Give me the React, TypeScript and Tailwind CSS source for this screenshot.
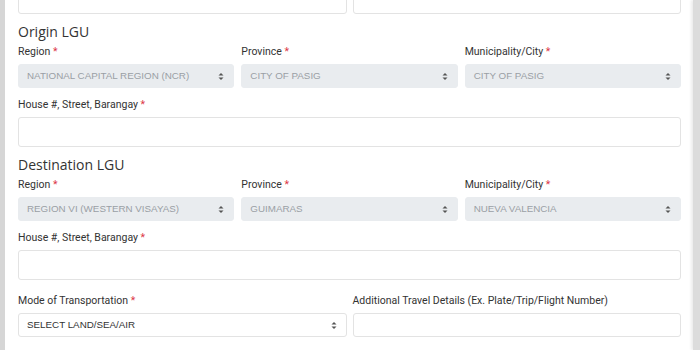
function Caret() {
  return (
    <svg width="6" height="9" viewBox="0 0 6 9" className="shrink-0">
      <path d="M3 1 L5.5 3.5 L0.5 3.5 Z" fill="#555" />
      <path d="M3 8 L5.5 5.5 L0.5 5.5 Z" fill="#555" />
    </svg>
  )
}

function Label({ text, required = true }: { text: string; required?: boolean }) {
  return (
    <p className="text-[10.5px] leading-[12px] text-[#333] font-['Roboto',sans-serif] mb-[6px]">
      {text}
      {required && <span className="text-[#dc3545]"> *</span>}
    </p>
  )
}

function Select({ value, disabled = true }: { value: string; disabled?: boolean }) {
  return (
    <div
      className={`h-[24px] rounded-[3px] border flex items-center justify-between pl-[8px] pr-[9px] font-['Liberation_Sans',Arial,sans-serif] text-[9.8px] ${
        disabled ? 'bg-[#e9ecef] border-[#e9ecef] text-[#9a9fa5]' : 'bg-white border-[#e3e3e3] text-[#333]'
      }`}
    >
      <span>{value}</span>
      <Caret />
    </div>
  )
}

function TextBox({ h = 'h-[30px]' }: { h?: string }) {
  return <div className={`${h} rounded-[3px] border border-[#e3e3e3] bg-white`} />
}

function LguSection({ title, region, province, city }: { title: string; region: string; province: string; city: string }) {
  return (
    <div>
      <h3 className="text-[14px] leading-[18px] text-[#333] font-['Open_Sans',sans-serif] mb-[5px]">{title}</h3>
      <div className="grid grid-cols-3 gap-x-[7px]">
        <div>
          <Label text="Region" />
          <Select value={region} />
        </div>
        <div>
          <Label text="Province" />
          <Select value={province} />
        </div>
        <div>
          <Label text="Municipality/City" />
          <Select value={city} />
        </div>
      </div>
      <div className="mt-[11px]">
        <Label text="House #, Street, Barangay" />
        <TextBox />
      </div>
    </div>
  )
}

export default function App() {
  return (
    <div className="w-[700px] h-[350px] flex bg-white overflow-hidden">
      <div className="w-[5px] bg-[#d6d6d6]" />
      <div className="flex-1 pl-[13px] pr-[12px] -mt-[16px]">
        {/* Previous row */}
        <div className="grid grid-cols-2 gap-x-[6px]">
          <TextBox />
          <TextBox />
        </div>

        <div className="mt-[9px]">
          <LguSection
            title="Origin LGU"
            region="NATIONAL CAPITAL REGION (NCR)"
            province="CITY OF PASIG"
            city="CITY OF PASIG"
          />
        </div>

        <div className="mt-[9px]">
          <LguSection
            title="Destination LGU"
            region="REGION VI (WESTERN VISAYAS)"
            province="GUIMARAS"
            city="NUEVA VALENCIA"
          />
        </div>

        {/* Transportation */}
        <div className="grid grid-cols-2 gap-x-[6px] mt-[15px]">
          <div>
            <Label text="Mode of Transportation" />
            <Select value="SELECT LAND/SEA/AIR" disabled={false} />
          </div>
          <div>
            <Label text="Additional Travel Details (Ex. Plate/Trip/Flight Number)" required={false} />
            <TextBox h="h-[24px]" />
          </div>
        </div>
      </div>
      <div className="w-[7px] bg-[#dcdcdc] shadow-[-2px_0_3px_rgba(0,0,0,0.08)]" />
    </div>
  )
}
